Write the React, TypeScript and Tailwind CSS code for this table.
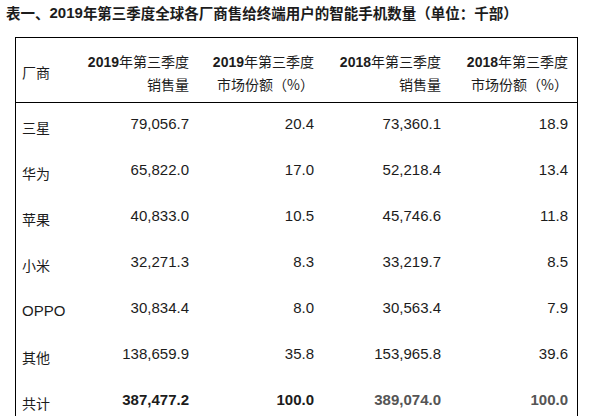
const cjk = '"Noto Sans CJK SC", sans-serif';

interface Row {
  name: string;
  sales19: string;
  share19: string;
  sales18: string;
  share18: string;
  total?: boolean;
}

const rows: Row[] = [
  { name: '三星', sales19: '79,056.7', share19: '20.4', sales18: '73,360.1', share18: '18.9' },
  { name: '华为', sales19: '65,822.0', share19: '17.0', sales18: '52,218.4', share18: '13.4' },
  { name: '苹果', sales19: '40,833.0', share19: '10.5', sales18: '45,746.6', share18: '11.8' },
  { name: '小米', sales19: '32,271.3', share19: '8.3', sales18: '33,219.7', share18: '8.5' },
  { name: 'OPPO', sales19: '30,834.4', share19: '8.0', sales18: '30,563.4', share18: '7.9' },
  { name: '其他', sales19: '138,659.9', share19: '35.8', sales18: '153,965.8', share18: '39.6' },
  { name: '共计', sales19: '387,477.2', share19: '100.0', sales18: '389,074.0', share18: '100.0', total: true },
];

function HeadCell({ year, second }: { year: string; second: string }) {
  return (
    <div className="flex flex-col items-end pt-[4px] text-[14px] leading-[22px] text-[#1c1c1c]">
      <div className="flex items-baseline">
        <span className="font-['Liberation_Sans',sans-serif] font-bold text-[14px]">{year}</span>
        <span className="font-['Noto_Sans_CJK_SC',sans-serif]">年第三季度</span>
      </div>
      <div className="font-['Noto_Sans_CJK_SC',sans-serif]">{second}</div>
    </div>
  );
}

export default function App() {
  return (
    <div className="w-[591px] h-[416px] overflow-hidden bg-white text-[#1c1c1c]">
      <div className="h-[37px] pl-[6px] pt-[3px] flex items-start text-[14.5px] leading-[20px] font-bold" style={{ fontFamily: cjk }}>
        <span>表一、</span>
        <span className="font-['Liberation_Sans',sans-serif] text-[15px]">2019</span>
        <span>年第三季度全球各厂商售给终端用户的智能手机数量（单位：千部）</span>
      </div>

      <div className="ml-[15px] w-[563px] border-l border-r border-t border-black h-[400px]">
        <div className="grid grid-cols-[60px_113px_125px_127px_127px] pr-[9px] h-[65px] items-center border-b border-black">
          <div className="pl-[6px] pt-[4px] text-[14px] font-['Noto_Sans_CJK_SC',sans-serif]">厂商</div>
          <HeadCell year="2019" second="销售量" />
          <HeadCell year="2019" second="市场份额（%）" />
          <HeadCell year="2018" second="销售量" />
          <HeadCell year="2018" second="市场份额（%）" />
        </div>

        {rows.map((r) => (
          <div key={r.name} className="grid grid-cols-[60px_113px_125px_127px_127px] pr-[9px] h-[46px] items-center">
            <div
              className={`pl-[6px] pt-[2px] text-[14px] ${r.name === 'OPPO' ? "font-['Liberation_Sans',sans-serif] text-[15px]" : "font-['Noto_Sans_CJK_SC',sans-serif]"}`}
            >
              {r.name}
            </div>
            {[r.sales19, r.share19, r.sales18, r.share18].map((v, i) => (
              <div
                key={i}
                className={`text-right pb-[4px] text-[15px] font-['Liberation_Sans',sans-serif] ${r.total ? 'font-bold' : ''} ${r.total && i >= 2 ? 'text-[#555]' : ''}`}
              >
                {v}
              </div>
            ))}
          </div>
        ))}
      </div>
    </div>
  );
}
